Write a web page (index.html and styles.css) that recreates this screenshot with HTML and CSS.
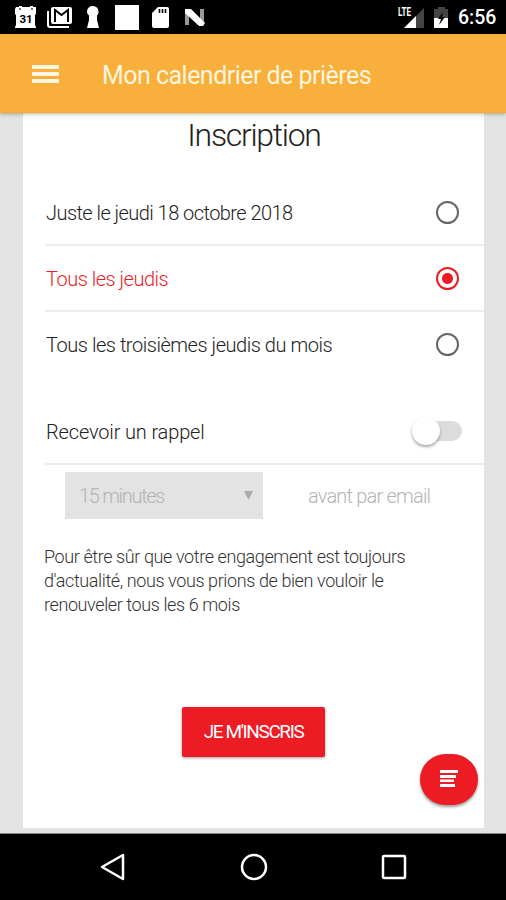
FILE: index.html
```html
<!DOCTYPE html>
<html lang="fr">
   <head>
      <meta charset="UTF-8">
      <meta name="viewport" content="width=device-width, initial-scale=1.0">
      <title>Mon calendrier de prières</title>
      <link rel="stylesheet" href="styles.css">
   </head>
   <body>
      <div class="status-bar">
         <div class="notifications">
            <svg width="24" height="24" viewBox="0 0 24 24">
               <path fill="#fff" d="M2 2h3V1h3v1h8V1h3v1h3v7l-1 1v10l1 2v1H1v-1l1-2V10L1 9V4z"/>
               <path fill="#777" d="M5 3h2v2H5zM17 3h2v2h-2z"/>
               <text x="12" y="18" text-anchor="middle" font-size="11.5">31</text>
            </svg>
            <svg width="26" height="24" viewBox="0 0 26 24">
               <path fill="none" stroke="#fff" stroke-width="2" d="M2 6v14q0 2 2 2h19"/>
               <rect x="5" y="2" width="21" height="17" rx="2" fill="#fff"/>
               <path fill="none" stroke="#000" stroke-width="2" d="M9 17V5l6.500 5L22 5v12"/>
            </svg>
            <svg width="14" height="24" viewBox="0 0 14 24">
               <path fill="#fff" d="M7 1a5.500 5.500 0 0 1 5.500 5.500c0 2-.5 3-1.500 4L11 15l2 8H1l2-8v-4.500c-1-1-2-2-2-4A5.500 5.500 0 0 1 7 1z"/>
            </svg>
            <div class="blank-icon"></div>
            <svg width="18" height="24" viewBox="0 0 18 24">
               <path fill="#fff" d="M6 2h9q2 0 2 2v17q0 2-2 2H2q-2 0-2-2V8z"/>
               <path stroke="#000" stroke-width="1.600" d="M7.500 4v4M10.500 4v4M13.500 4v4"/>
            </svg>
            <svg width="22" height="24" viewBox="0 0 22 24">
               <path fill="#999" d="M1 5h4v15H1zM16 4h4v16h-4z"/>
               <path fill="#fff" d="M1 4h6l14 14-2 3h-4L1 8z"/>
            </svg>
         </div>
         <div class="system">
            <svg width="26" height="24" viewBox="0 0 26 24">
               <path fill="#444" d="M26 3v20H6z"/>
               <path fill="#fff" d="M18 11v12H6z"/>
               <text x="0" y="11" font-size="12" textLength="13" lengthAdjust="spacingAndGlyphs" fill="#fff">LTE</text>
            </svg>
            <svg width="15" height="24" viewBox="0 0 15 24">
               <path fill="#444" d="M4 2h7v2h3v9H0V4h4z"/>
               <path fill="#fff" d="M0 13h14v10H0z"/>
               <path fill="#000" d="M9 7L4 14h3l-2 6 6-8H8z"/>
            </svg>
            <span class="clock">6:56</span>
         </div>
      </div>

      <header class="app-bar">
         <div class="menu-btn"><span></span><span></span><span></span></div>
         <div class="app-title">Mon calendrier de prières</div>
      </header>

      <main>
         <div class="sheet">
            <h1>Inscription</h1>
            <div class="option">
               <span class="opt-day">Juste le jeudi 18 octobre 2018</span>
               <i class="radio"></i>
            </div>
            <div class="option selected">
               <span class="opt-week">Tous les jeudis</span>
               <i class="radio"></i>
            </div>
            <div class="option last">
               <span class="opt-month">Tous les troisièmes jeudis du mois</span>
               <i class="radio"></i>
            </div>

            <div class="option reminder">
               <span class="opt-reminder">Recevoir un rappel</span>
               <div class="toggle"><i></i></div>
            </div>
            <div class="delay">
               <div class="select">
                  <span>15 minutes</span>
                  <svg width="9" height="9" viewBox="0 0 9 9"><path fill="#aaa" d="M0 0h9L4.500 9z"/></svg>
               </div>
               <span class="by-email">avant par email</span>
            </div>

            <p class="note">Pour être sûr que votre engagement est toujours<br>d'actualité, nous vous prions de bien vouloir le<br>renouveler tous les 6 mois</p>
            <button>JE M'INSCRIS</button>
         </div>
         <div class="fab">
            <svg width="18" height="18" viewBox="0 0 18 18">
               <path fill="#fff" d="M0 0h18v3H0zM0 5h16v3H0zM0 9.500h14v2.500H0zM0 14h15v3H0z"/>
            </svg>
         </div>
      </main>

      <nav class="nav-bar">
         <svg width="28" height="28" viewBox="0 0 28 28"><path d="M3 14L24 2v24z"/></svg>
         <svg width="28" height="28" viewBox="0 0 28 28"><circle cx="14" cy="14" r="12"/></svg>
         <svg width="28" height="28" viewBox="0 0 28 28"><rect x="3" y="3" width="22" height="22" rx="1"/></svg>
      </nav>
   </body>
</html>
```
FILE: styles.css
```css
* {
margin: 0;
padding: 0;
box-sizing: border-box;
}
body {
width: 506px;
height: 900px;
display: flex;
flex-direction: column;
overflow: hidden;
background: #e3e3e3;
color: #222;
font-family: "Roboto", sans-serif;
font-weight: 300;
font-size: 20px;
white-space: nowrap;
}
svg {
display: block;
}
.status-bar {
height: 34px;
background: #000;
display: flex;
justify-content: space-between;
padding: 5px 11px 0 14px;
}
.status-bar text {
font-weight: 700;
}
.notifications {
display: flex;
}
.notifications svg:nth-child(2) {
margin-left: 8px;
}
.notifications svg:nth-child(3) {
margin-left: 14px;
}
.blank-icon {
width: 24px;
height: 25px;
margin-left: 15px;
background: #fff;
}
.blank-icon + svg {
margin: 0 14px 0 13px;
}
.system {
display: flex;
gap: 11px;
}
.system svg:nth-child(2) {
margin-left: -1px;
}
.clock {
width: 37px;
margin-left: -2px;
color: #fff;
font-size: 19.5px;
font-weight: 500;
line-height: 26px;
}
.app-bar {
position: relative;
z-index: 1;
height: 79px;
display: flex;
align-items: center;
padding-left: 32px;
background: #f8af3c;
box-shadow: 0 1px 4px rgba(0, 0, 0, 0.3);
border-bottom: 1px solid #fbab1c;
}
.menu-btn {
width: 27px;
display: flex;
flex-direction: column;
gap: 3px;
margin: 1px 43px 0 0;
}
.menu-btn span {
height: 4px;
background: #fff5e0;
}
.app-title {
padding-top: 5px;
color: #fff5dc;
font-size: 25px;
font-weight: 400;
letter-spacing: -0.53px;
}
main {
position: relative;
height: 720px;
padding: 0 22px 0 23px;
}
.sheet {
height: 715px;
display: flex;
flex-direction: column;
background: #fff;
padding-left: 22px;
}
h1 {
height: 67px;
padding-right: 21px;
text-align: center;
font-size: 32px;
font-weight: 300;
line-height: 44px;
letter-spacing: -1.3px;
}
.option {
height: 66px;
flex-shrink: 0;
display: flex;
align-items: center;
justify-content: space-between;
padding-right: 25px;
border-bottom: 2px solid #ececec;
}
.option span {
padding: 2px 0 0 1px;
}
.opt-day {
letter-spacing: -0.55px;
}
.opt-week {
letter-spacing: -0.5px;
}
.opt-month {
letter-spacing: -0.46px;
}
.opt-reminder {
letter-spacing: -0.15px;
}
.option.last {
border-bottom-color: transparent;
}
.selected {
color: #ed1c24;
}
.radio {
width: 23px;
height: 23px;
border: 2.5px solid #666;
border-radius: 50%;
}
.selected .radio {
border-color: #ed1c24;
background: radial-gradient(circle, #ed1c24 5px, #fff 6px);
}
.reminder {
margin-top: 21px;
padding-right: 22px;
}
.toggle {
width: 48px;
height: 20px;
border-radius: 10px;
background: #dcdcdc;
}
.toggle i {
display: block;
width: 28px;
height: 28px;
margin: -4px 0 0 -2px;
border-radius: 50%;
background: #fff;
box-shadow: 0 2px 3px rgba(0, 0, 0, 0.35);
}
.delay {
display: flex;
align-items: center;
height: 47px;
margin: 7px 0 0 20px;
color: #b4b4b4;
}
.select {
width: 198px;
height: 47px;
display: flex;
align-items: center;
justify-content: space-between;
padding: 0 10px 0 14px;
background: #e3e3e3;
letter-spacing: -1.3px;
}
.by-email {
margin-left: 45px;
letter-spacing: -0.8px;
}
.note {
margin-top: 26px;
margin-left: -1px;
font-size: 18px;
line-height: 24px;
letter-spacing: -0.4px;
color: #333;
}
button {
width: 143px;
height: 50px;
margin: 90px 0 0 137px;
padding-bottom: 2px;
border: none;
border-radius: 2px;
background: #ed1c24;
box-shadow: 0 1px 3px rgba(0, 0, 0, 0.4);
color: #fff;
font-family: inherit;
font-size: 19px;
font-weight: 400;
letter-spacing: -1.4px;
}
.fab {
position: absolute;
left: 420px;
top: 641px;
width: 58px;
height: 51px;
display: flex;
align-items: center;
justify-content: center;
padding-bottom: 2px;
border-radius: 27px;
background: #ed1c24;
box-shadow: 0 2px 3px rgba(0, 0, 0, 0.4);
}
.nav-bar {
height: 67px;
display: flex;
justify-content: space-between;
padding: 19px 98px 0 99px;
background: #000;
border-top: 1px solid #888;
}
.nav-bar svg {
fill: none;
stroke: #fff;
stroke-width: 2.5;
stroke-linejoin: round;
}
```
